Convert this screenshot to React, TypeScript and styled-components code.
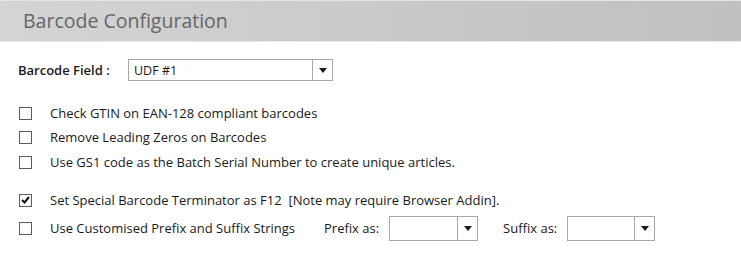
import React from 'react';
import styled, { createGlobalStyle } from 'styled-components';

const GlobalStyle = createGlobalStyle`
  html, body {
    margin: 0;
    padding: 0;
    background: #ffffff;
  }
  body {
    font-family: 'Open Sans', 'Noto Sans', 'DejaVu Sans', sans-serif;
    color: #1a1a1a;
  }
`;

const Panel = styled.div`
  width: 741px;
  height: 259px;
  background: #ffffff;
`;

const Header = styled.div`
  height: 40px;
  border-top: 1px solid #e4e4e4;
  border-bottom: 1px solid #e8e8e8;
  background: linear-gradient(to right, #d4d4d4, #c0c0c0);
  display: flex;
  align-items: center;
  padding-left: 23px;
`;

const Title = styled.h2`
  margin: 0 0 1px;
  font-size: 19.5px;
  font-weight: 400;
  color: #666666;
`;

const FieldRow = styled.div`
  display: flex;
  align-items: center;
  margin-top: 17px;
  padding-left: 18px;
  height: 22px;
`;

const FieldLabel = styled.label<{ strong?: boolean; width?: number }>`
  font-size: 13px;
  font-weight: ${(props) => (props.strong ? 600 : 400)};
  color: #1a1a1a;
  white-space: nowrap;
  min-width: ${(props) => (props.width ? `${props.width}px` : 'auto')};
`;

const Select = styled.div<{ width: number; height?: number }>`
  display: flex;
  align-items: stretch;
  box-sizing: border-box;
  width: ${(props) => props.width}px;
  height: ${(props) => props.height ?? 22}px;
  border: 1px solid #a8a8a8;
  background: #ffffff;
`;

const SelectValue = styled.div`
  flex: 1;
  display: flex;
  align-items: center;
  padding-left: 5px;
  font-size: 12.5px;
  color: #1a1a1a;
`;

const SelectButton = styled.div`
  width: 19px;
  border-left: 1px solid #a8a8a8;
  display: flex;
  align-items: center;
  justify-content: center;
`;

const Options = styled.div`
  margin-top: 20px;
  padding-left: 19px;
`;

const OptionRow = styled.div<{ gapAbove?: number; tall?: boolean }>`
  display: flex;
  align-items: center;
  height: ${(props) => (props.tall ? 26 : 24)}px;
  margin-top: ${(props) => props.gapAbove ?? 0}px;
`;

const Box = styled.span`
  box-sizing: border-box;
  width: 13px;
  height: 13px;
  border: 1.5px solid #5c5c5c;
  background: #ffffff;
  display: flex;
  align-items: center;
  justify-content: center;
  flex-shrink: 0;
`;

const OptionText = styled.span`
  margin-left: 18px;
  font-size: 13px;
  color: #1a1a1a;
  white-space: pre;
`;

const InlineLabel = styled(FieldLabel)<{ left: number }>`
  margin-left: ${(props) => props.left}px;
  margin-right: 10px;
`;

const Arrow = () => (
  <svg width="8" height="5" viewBox="0 0 8 5">
    <path d="M0 0 L8 0 L4 5 Z" fill="#1a1a1a" />
  </svg>
);

const Check = () => (
  <svg width="9" height="8" viewBox="0 0 9 8">
    <path d="M1 4 L3.5 6.5 L8 1" fill="none" stroke="#111" strokeWidth="2" />
  </svg>
);

interface IDropdown {
  width: number;
  height?: number;
  value?: string;
}

const Dropdown = ({ width, height, value }: IDropdown) => (
  <Select width={width} height={height}>
    <SelectValue>{value}</SelectValue>
    <SelectButton>
      <Arrow />
    </SelectButton>
  </Select>
);

interface ICheckbox {
  checked?: boolean;
}

const Checkbox = ({ checked }: ICheckbox) => (
  <Box>{checked && <Check />}</Box>
);

const options = [
  { text: 'Check GTIN on EAN-128 compliant barcodes', checked: false, gap: 0 },
  { text: 'Remove Leading Zeros on Barcodes', checked: false, gap: 0 },
  { text: 'Use GS1 code as the Batch Serial Number to create unique articles.', checked: false, gap: 1 },
  { text: 'Set Special Barcode Terminator as F12  [Note may require Browser Addin].', checked: true, gap: 14 },
];

const App = () => (
  <Panel>
    <GlobalStyle />
    <Header>
      <Title>Barcode Configuration</Title>
    </Header>
    <FieldRow>
      <FieldLabel strong width={110}>Barcode Field :</FieldLabel>
      <Dropdown width={205} value="UDF #1" />
    </FieldRow>
    <Options>
      {options.map((opt) => (
        <OptionRow key={opt.text} gapAbove={opt.gap}>
          <Checkbox checked={opt.checked} />
          <OptionText>{opt.text}</OptionText>
        </OptionRow>
      ))}
      <OptionRow tall gapAbove={3}>
        <Checkbox />
        <OptionText>Use Customised Prefix and Suffix Strings</OptionText>
        <InlineLabel left={29}>Prefix as:</InlineLabel>
        <Dropdown width={89} height={25} />
        <InlineLabel left={25}>Suffix as:</InlineLabel>
        <Dropdown width={88} height={25} />
      </OptionRow>
    </Options>
  </Panel>
);

export default App;
